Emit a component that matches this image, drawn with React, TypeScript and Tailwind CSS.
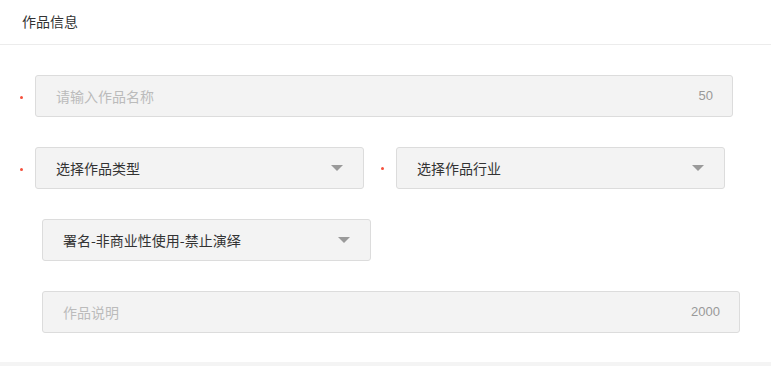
const Dot = () => (
  <div className="w-[35px] shrink-0 flex items-center">
    <span className="ml-[20px] mt-[3px] block w-[3px] h-[3px] rounded-full bg-[#f5503c]" />
  </div>
);

const Caret = () => (
  <svg width="12" height="6" viewBox="0 0 12 6" className="shrink-0">
    <path d="M0 0 L12 0 L6 6 Z" fill="#9a9a9a" />
  </svg>
);

const TextBox = ({ placeholder, count, width }: { placeholder: string; count: string; width: string }) => (
  <div
    className={`${width} h-[42px] rounded-[3px] border border-[#dcdcdc] bg-[#f3f3f3] flex items-center justify-between pl-[20px] pr-[19px]`}
  >
    <span className="text-[14px] text-[#bbbbbb]">{placeholder}</span>
    <span className="text-[13px] text-[#999999] font-['Liberation_Sans',sans-serif]">{count}</span>
  </div>
);

const Select = ({ label }: { label: string }) => (
  <div className="w-[329px] h-[42px] rounded-[3px] border border-[#dcdcdc] bg-[#f3f3f3] flex items-center justify-between pl-[20px] pr-[20px]">
    <span className="text-[14px] text-[#333333]">{label}</span>
    <Caret />
  </div>
);

export default function App() {
  return (
    <div className="w-[771px] h-[366px] bg-white flex flex-col font-['Noto_Sans_CJK_SC','Noto_Sans',sans-serif]">
      <div className="h-[45px] shrink-0 border-b border-[#ececec] pl-[22px] pt-[8px]">
        <span className="text-[14px] leading-[20px] text-[#333333]">作品信息</span>
      </div>

      <div className="flex flex-col gap-[30px] pt-[30px]">
        <div className="flex">
          <Dot />
          <TextBox placeholder="请输入作品名称" count="50" width="w-[698px]" />
        </div>

        <div className="flex">
          <Dot />
          <Select label="选择作品类型" />
          <div className="w-[32px] shrink-0 flex items-center">
            <span className="ml-[17px] block w-[3px] h-[3px] rounded-full bg-[#f5503c]" />
          </div>
          <Select label="选择作品行业" />
        </div>

        <div className="flex pl-[42px]">
          <Select label="署名-非商业性使用-禁止演绎" />
        </div>

        <div className="flex pl-[42px]">
          <TextBox placeholder="作品说明" count="2000" width="w-[698px]" />
        </div>
      </div>

      <div className="mt-auto h-[4px] bg-[#f4f4f4]" />
    </div>
  );
}
